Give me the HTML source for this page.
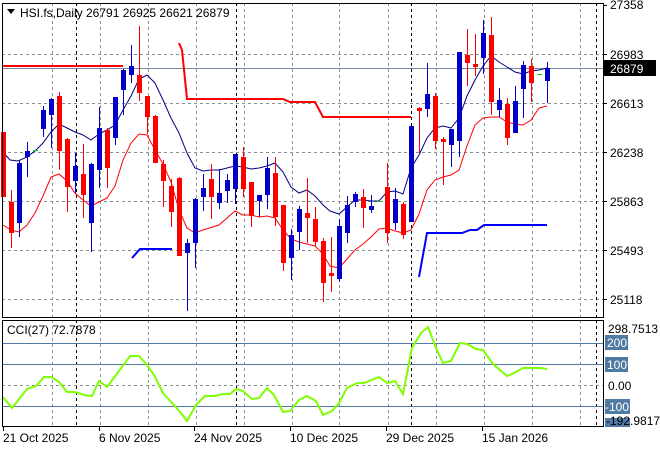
<!DOCTYPE html>
<html><head><meta charset="utf-8"><style>
html,body{margin:0;padding:0;background:#fff;width:660px;height:450px;overflow:hidden}
svg{display:block;font-family:"Liberation Sans",sans-serif;font-size:12px}
</style></head><body>
<svg id="s" width="660" height="450" xmlns="http://www.w3.org/2000/svg">
<rect x="0" y="0" width="660" height="450" fill="#fff"/>
<g id="grid" stroke="#8a8f96" stroke-width="1" stroke-dasharray="3,3" fill="none"></g>
<g id="bl" stroke="#000" stroke-width="1" stroke-dasharray="3,3" fill="none">
<line x1="76.5" y1="3" x2="76.5" y2="318"/><line x1="236.5" y1="3" x2="236.5" y2="318"/><line x1="411.5" y1="3" x2="411.5" y2="318"/><line x1="596.5" y1="3" x2="596.5" y2="318"/>
<line x1="76.5" y1="320" x2="76.5" y2="426"/><line x1="236.5" y1="320" x2="236.5" y2="426"/><line x1="411.5" y1="320" x2="411.5" y2="426"/><line x1="596.5" y1="320" x2="596.5" y2="426"/>
</g>
<line x1="2" y1="68.5" x2="603" y2="68.5" stroke="#778899" stroke-width="1"/>
<!-- CCI levels -->
<line x1="2" y1="343.5" x2="603" y2="343.5" stroke="#4f7aa3"/>
<line x1="2" y1="364.5" x2="603" y2="364.5" stroke="#4f7aa3"/>
<line x1="2" y1="406.5" x2="603" y2="406.5" stroke="#4f7aa3"/>
<line x1="2" y1="385.5" x2="603" y2="385.5" stroke="#8a8f96" stroke-dasharray="3,3"/>
<polyline fill="none" stroke="#ff0000" stroke-width="2" points="3,66 123,66"/>
<polyline fill="none" stroke="#ff0000" stroke-width="2" points="179,43 182,50 187,99 283,99 290,102 315,102 323,117 411,117"/>
<polyline fill="none" stroke="#0000ff" stroke-width="2" points="132,258 140,249 172,249"/>
<polyline fill="none" stroke="#0000ff" stroke-width="2" points="419,277 427,233 462,233 470,230 477,230 484,225 547,225"/>
<polyline fill="none" stroke="#000080" stroke-width="1" points="3,152 10,160 18,161 27,157 35,151 43,143 51,132 59,124 67,128 75,132 83,135 91,140 99,134 107,130 115,125 123,110 131,96 139,79 147,75 155,83 163,100 171,118 179,133 187,153 195,168 203,171 211,170 219,170 227,168 235,166 243,167 251,169 259,168 267,166 275,163 283,172 291,187 299,193 307,190 315,196 323,205 330,211 339,214 347,207 355,200 363,200 371,201 379,201 387,192 395,191 403,194 411,168 419,155 427,138 435,128 443,126 451,128 459,118 467,96 475,80 483,66 491,56 499,62 507,67 515,72 523,74 531,71 539,70 547,68"/>
<polyline fill="none" stroke="#ff0000" stroke-width="1" points="3,225 11,230 19,232 27,225 35,213 43,196 51,177 59,174 67,181 75,193 83,200 91,206 99,202 107,198 115,186 123,160 131,143 139,134 147,135 155,150 163,164 171,182 179,210 187,228 195,233 203,230 219,225 235,211 243,215 251,215 259,217 267,216 275,218 283,230 291,239 299,242 307,244 315,246 323,254 330,266 339,268 347,259 355,250 363,244 371,237 379,229 387,228 395,231 403,233 411,230 419,214 427,190 435,180 443,177 451,175 459,170 467,146 475,125 483,118 491,117 499,117 507,122 515,124 523,125 531,120 539,108 547,106"/>
<g id="c"></g>
<polyline fill="none" stroke="#7fff00" stroke-width="2" points="3,397 12,408 27,389 36,386 44,377 51,377 59,382 67,392 75,392 84,395 92,396 99,381 107,387 116,375 122,367 130,356 139,356 147,365 154,375 163,393 173,404 181,413 187,421 196,405 205,396 215,396 223,394 230,394 236,389 243,391 252,399 259,398 267,388 274,395 283,412 290,411 299,400 307,396 316,401 323,415 332,411 339,403 347,388 357,383 364,383 379,377 387,383 395,381 403,394 412,348 421,333 428,327 436,348 443,363 451,361 460,343 467,344 476,349 483,350 493,364 507,376 514,373 523,368 539,368 547,369"/>
<!-- frames -->
<rect x="2.5" y="3.5" width="601" height="314" fill="none" stroke="#000"/>
<rect x="2.5" y="320.5" width="601" height="106" fill="none" stroke="#000"/>
<!-- title -->
<polygon points="7,9 15,9 11,14" fill="#000"/>
<text x="20" y="17" fill="#000">HSI.fs,Daily  26791 26925 26621 26879</text>
<text x="7" y="334" fill="#000">CCI(27) 72.7878</text>
<!-- price axis -->
<g fill="#000">
<text x="610" y="9">27358</text><text x="610" y="59">26983</text><text x="610" y="108">26613</text><text x="610" y="157">26238</text><text x="610" y="206">25863</text><text x="610" y="255">25493</text><text x="610" y="304">25118</text>
</g>
<g stroke="#000"><line x1="603" y1="5.5" x2="607" y2="5.5"/><line x1="603" y1="54.5" x2="607" y2="54.5"/><line x1="603" y1="103.5" x2="607" y2="103.5"/><line x1="603" y1="152.5" x2="607" y2="152.5"/><line x1="603" y1="201.5" x2="607" y2="201.5"/><line x1="603" y1="250.5" x2="607" y2="250.5"/><line x1="603" y1="299.5" x2="607" y2="299.5"/></g>
<rect x="604" y="60" width="52" height="16" fill="#000"/>
<text x="610" y="73" fill="#fff">26879</text>
<!-- CCI axis -->
<text x="608" y="333" fill="#000">298.7513</text>
<rect x="605" y="335" width="23" height="15" fill="#4f7aa3"/><text x="607" y="347" fill="#fff">200</text>
<rect x="605" y="357" width="23" height="15" fill="#4f7aa3"/><text x="607" y="369" fill="#fff">100</text>
<text x="608" y="390" fill="#000">0.00</text>
<rect x="605" y="399" width="25" height="15" fill="#4f7aa3"/><text x="605" y="411" fill="#fff">-100</text>
<rect x="605" y="418" width="25" height="9" fill="#4f7aa3"/>
<text x="606" y="425" fill="#000">-192.9817</text>
<!-- dates -->
<g fill="#000">
<text x="3" y="442">21 Oct 2025</text><text x="99" y="442">6 Nov 2025</text><text x="194" y="442">24 Nov 2025</text><text x="290" y="442">10 Dec 2025</text><text x="386" y="442">29 Dec 2025</text><text x="482" y="442">15 Jan 2026</text>
</g>
<g stroke="#000"><line x1="3.5" y1="427" x2="3.5" y2="431"/><line x1="99.5" y1="427" x2="99.5" y2="431"/><line x1="194.5" y1="427" x2="194.5" y2="431"/><line x1="290.5" y1="427" x2="290.5" y2="431"/><line x1="386.5" y1="427" x2="386.5" y2="431"/><line x1="482.5" y1="427" x2="482.5" y2="431"/></g>
</svg>
<script>
var ns="http://www.w3.org/2000/svg";
function el(p,t,a){var e=document.createElementNS(ns,t);for(var k in a)e.setAttribute(k,a[k]);p.appendChild(e);return e;}
var g=document.getElementById('grid');
[52,100,148,196,244,292,339,388,436,484,532,580].forEach(function(x){el(g,'line',{x1:x+.5,y1:3,x2:x+.5,y2:318});el(g,'line',{x1:x+.5,y1:320,x2:x+.5,y2:426});});
[54,103,152,201,250,299].forEach(function(y){el(g,'line',{x1:2,y1:y+.5,x2:603,y2:y+.5});});
var C=[
['r',132,197,132,197],['r',190,248,202,233],['b',160,237,163,223],['b',142,177,151,157],['g',150],
['b',106,137,110,129],['b',98,148,99,115],['r',92,170,96,151],['r',138,212,139,187],['b',153,193,166,181],
['r',144,218,174,195],['b',163,252,164,223],['b',107,188,128,170],['r',128,188,130,168],['b',97,145,97,138],
['b',69,115,70,90],['b',45,83,66,75],['r',26,101,75,93],['r',96,134,96,117],['r',115,163,116,163],
['r',160,207,164,181],['r',179,227,186,212],['r',177,256,178,256],['b',239,311,243,253],['b',198,268,199,243],
['b',174,211,188,197],['r',164,219,179,197],['b',169,209,193,203],['b',174,203,180,191],['b',154,204,154,189],
['r',147,197,157,189],['r',182,227,182,216],['b',195,217,195,201],['b',157,209,168,195],['r',157,226,173,217],
['r',205,271,205,263],['b',229,280,235,258],['b',206,250,209,232],['r',178,243,213,218],['r',207,247,219,242],
['r',238,302,241,283],['r',237,292,273,276],['b',219,282,226,279],['b',196,243,205,233],['b',192,207,194,202],
['r',189,228,197,208],['b',195,213,206,210],['g',201],['r',163,243,187,233],['b',188,230,199,223],
['r',202,239,204,235],['b',126,222,126,222],['r',107,153,108,111],['b',63,117,94,109],['r',93,149,96,141],
['r',137,185,139,142],['b',129,167,129,145],['b',52,157,52,141],['r',29,86,55,63],['r',34,76,64,67],
['b',20,74,33,58],['r',17,115,35,102],['b',88,117,100,110],['r',98,145,104,138],['b',86,133,101,133],
['b',61,118,65,89],['r',59,102,66,83],['g',74],['b',62,103,68,81]];
var cg=document.getElementById('c');
C.forEach(function(d,i){var x=3+8*i;
 if(d[0]=='g'){el(cg,'line',{x1:x-2,y1:d[1]+.5,x2:x+3,y2:d[1]+.5,stroke:'#00e000'});return;}
 var col=d[0]=='r'?'#ff0000':'#0000c8';
 el(cg,'line',{x1:x+.5,y1:d[1],x2:x+.5,y2:d[2],stroke:col});
 el(cg,'rect',{x:x-2,y:d[3],width:5,height:Math.max(2,d[4]-d[3]),fill:col});
});
</script>
</body></html>
